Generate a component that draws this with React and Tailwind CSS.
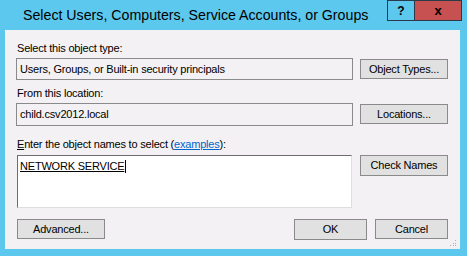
import React from 'react';

const font = { fontFamily: '"Liberation Sans", Arial, sans-serif' };

// botón clásico de Windows
const Btn = ({ children, className = '' }) => (
  <div
    className={`flex items-center justify-center bg-[#e1e1e1] border border-[#8a8a8a] text-[11px] tracking-[-0.2px] text-black ${className}`}
  >
    {children}
  </div>
);

export default function App() {
  return (
    <div className="w-[467px] h-[256px] bg-[#5dc8ee] flex flex-col overflow-hidden" style={font}>
      {/* barra de título */}
      <div className="h-[30px] flex items-start shrink-0">
        <div className="pl-[23px] pt-[5px] text-[14.2px] leading-[20px] text-black whitespace-nowrap">
          Select Users, Computers, Service Accounts, or Groups
        </div>
        <div className="ml-auto mr-[5px] flex h-[21px]">
          <div className="w-[28px] h-full border border-[#2a3a4a] flex items-center justify-center text-[12px] font-bold text-black">
            ?
          </div>
          <div className="w-[47px] h-full border border-l-0 border-[#2a3a4a] bg-[#c75050] flex items-center justify-center text-[13px] font-bold text-black">
            x
          </div>
        </div>
      </div>

      {/* contenido */}
      <div className="relative ml-[5px] w-[455px] h-[219px] bg-[#f3f1f4] flex flex-col pl-[11px] text-[11px] tracking-[-0.2px] text-black">
        <div className="mt-[11px] h-[14px] leading-[14px] pl-[1px]">Select this object type:</div>
        <div className="mt-[3px] flex items-start">
          <div className="w-[337px] h-[22px] border border-[#8a8a8a] flex items-center pl-[3px]">
            Users, Groups, or Built-in security principals
          </div>
          <Btn className="ml-[7px] mt-[1px] w-[88px] h-[20px]">Object Types...</Btn>
        </div>

        <div className="mt-[6px] h-[14px] leading-[14px] pl-[1px]">From this location:</div>
        <div className="mt-[3px] flex items-start">
          <div className="w-[337px] h-[23px] border border-[#8a8a8a] flex items-center pl-[3px]">
            child.csv2012.local
          </div>
          <Btn className="ml-[7px] mt-[1px] w-[88px] h-[20px]">Locations...</Btn>
        </div>

        <div className="mt-[11px] h-[14px] leading-[14px] pl-[1px]">
          <span className="underline">E</span>nter the object names to select (
          <span className="text-[#0066cc] underline">examples</span>):
        </div>
        <div className="mt-[4px] flex items-start">
          <div className="ml-[1px] w-[335px] h-[53px] bg-white border border-t-[#6e6e6e] border-l-[#6e6e6e] border-r-[#dedede] border-b-[#dedede] pl-[2px] pt-[2px]">
            <span className="inline-flex items-center h-[14px] leading-[14px] underline">
              NETWORK SERVICE
              <span className="w-px h-[13px] bg-black ml-[1px]" />
            </span>
          </div>
          <Btn className="ml-[8px] w-[88px] h-[21px]">Check Names</Btn>
        </div>

        <div className="mt-[11px] flex items-start">
          <Btn className="ml-[1px] w-[88px] h-[20px]">Advanced...</Btn>
          <Btn className="ml-auto w-[73px] h-[21px] border-[#3c7fb1]">OK</Btn>
          <Btn className="ml-[8px] mr-[12px] w-[73px] h-[20px]">Cancel</Btn>
        </div>

        {/* agarre de redimensionar */}
        <div className="absolute right-[3px] bottom-[2px] grid grid-cols-3 gap-[1px] w-[7px] h-[7px]">
          <span />
          <span />
          <span className="w-px h-px bg-[#b0b0b0]" />
          <span />
          <span className="w-px h-px bg-[#b0b0b0]" />
          <span className="w-px h-px bg-[#b0b0b0]" />
          <span className="w-px h-px bg-[#b0b0b0]" />
          <span className="w-px h-px bg-[#b0b0b0]" />
          <span className="w-px h-px bg-[#b0b0b0]" />
        </div>
      </div>
    </div>
  );
}
